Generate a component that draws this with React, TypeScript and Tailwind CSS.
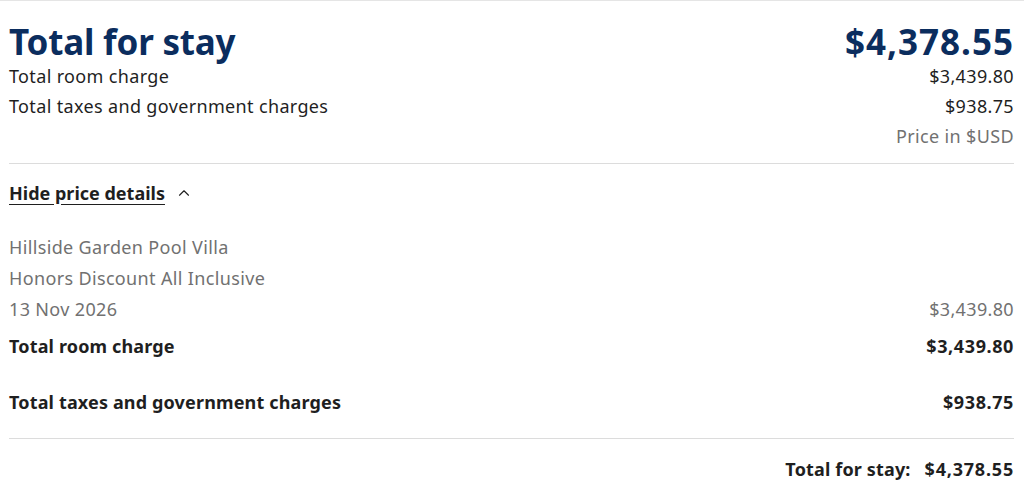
import { ChevronUp } from 'lucide-react';

const font = { fontFamily: '"Noto Sans", sans-serif' };

export default function App() {
  return (
    <div className="min-h-screen bg-white border-t border-[#e5e5e5]" style={font}>
      <div className="px-[9px] pr-[10px]">
        {/* Summary */}
        <div className="pt-[19px]">
          <div className="flex justify-between items-baseline">
            <h1 className="text-[35px] leading-[44px] font-bold text-[#0b2d5e] tracking-[-0.2px]">Total for stay</h1>
            <span className="text-[35px] leading-[44px] font-bold text-[#0b2d5e] tracking-[1px]">$4,378.55</span>
          </div>
          <div className="-mt-[3px] flex justify-between text-[18px] leading-[30px] text-[#1f1f1f] tracking-[0.35px]">
            <span>Total room charge</span>
            <span>$3,439.80</span>
          </div>
          <div className="flex justify-between text-[18px] leading-[30px] text-[#1f1f1f] tracking-[0.35px]">
            <span>Total taxes and government charges</span>
            <span>$938.75</span>
          </div>
          <div className="text-right text-[18px] leading-[30px] text-[#717171] tracking-[0.35px]">Price in $USD</div>
        </div>

        <div className="mt-[12px] border-t border-[#dcdcdc]" />

        {/* Toggle */}
        <button className="flex items-center gap-[10px] mt-[15px] h-[28px] text-[18px] font-bold text-[#1f1f1f]">
          <span className="underline underline-offset-[4px]">Hide price details</span>
          <ChevronUp className="w-[18px] h-[18px]" strokeWidth={1.5} />
        </button>

        {/* Details */}
        <div className="mt-[25px] text-[18px] leading-[31px] text-[#717171] tracking-[0.35px]">
          <div>Hillside Garden Pool Villa</div>
          <div>Honors Discount All Inclusive</div>
          <div className="flex justify-between">
            <span>13 Nov 2026</span>
            <span>$3,439.80</span>
          </div>
        </div>
        <div className="flex justify-between mt-[6px] text-[18px] leading-[30px] font-bold text-[#1f1f1f] tracking-[0.15px]">
          <span>Total room charge</span>
          <span className="tracking-[0.6px]">$3,439.80</span>
        </div>
        <div className="flex justify-between mt-[26px] text-[18px] leading-[30px] font-bold text-[#1f1f1f] tracking-[0.15px]">
          <span>Total taxes and government charges</span>
          <span className="tracking-[0.6px]">$938.75</span>
        </div>

        <div className="mt-[21px] border-t border-[#dcdcdc]" />

        <div className="flex justify-end gap-[14px] mt-[15px] text-[18px] leading-[30px] font-bold text-[#1f1f1f] tracking-[0.15px]">
          <span>Total for stay:</span>
          <span className="tracking-[0.8px]">$4,378.55</span>
        </div>
      </div>
    </div>
  );
}
